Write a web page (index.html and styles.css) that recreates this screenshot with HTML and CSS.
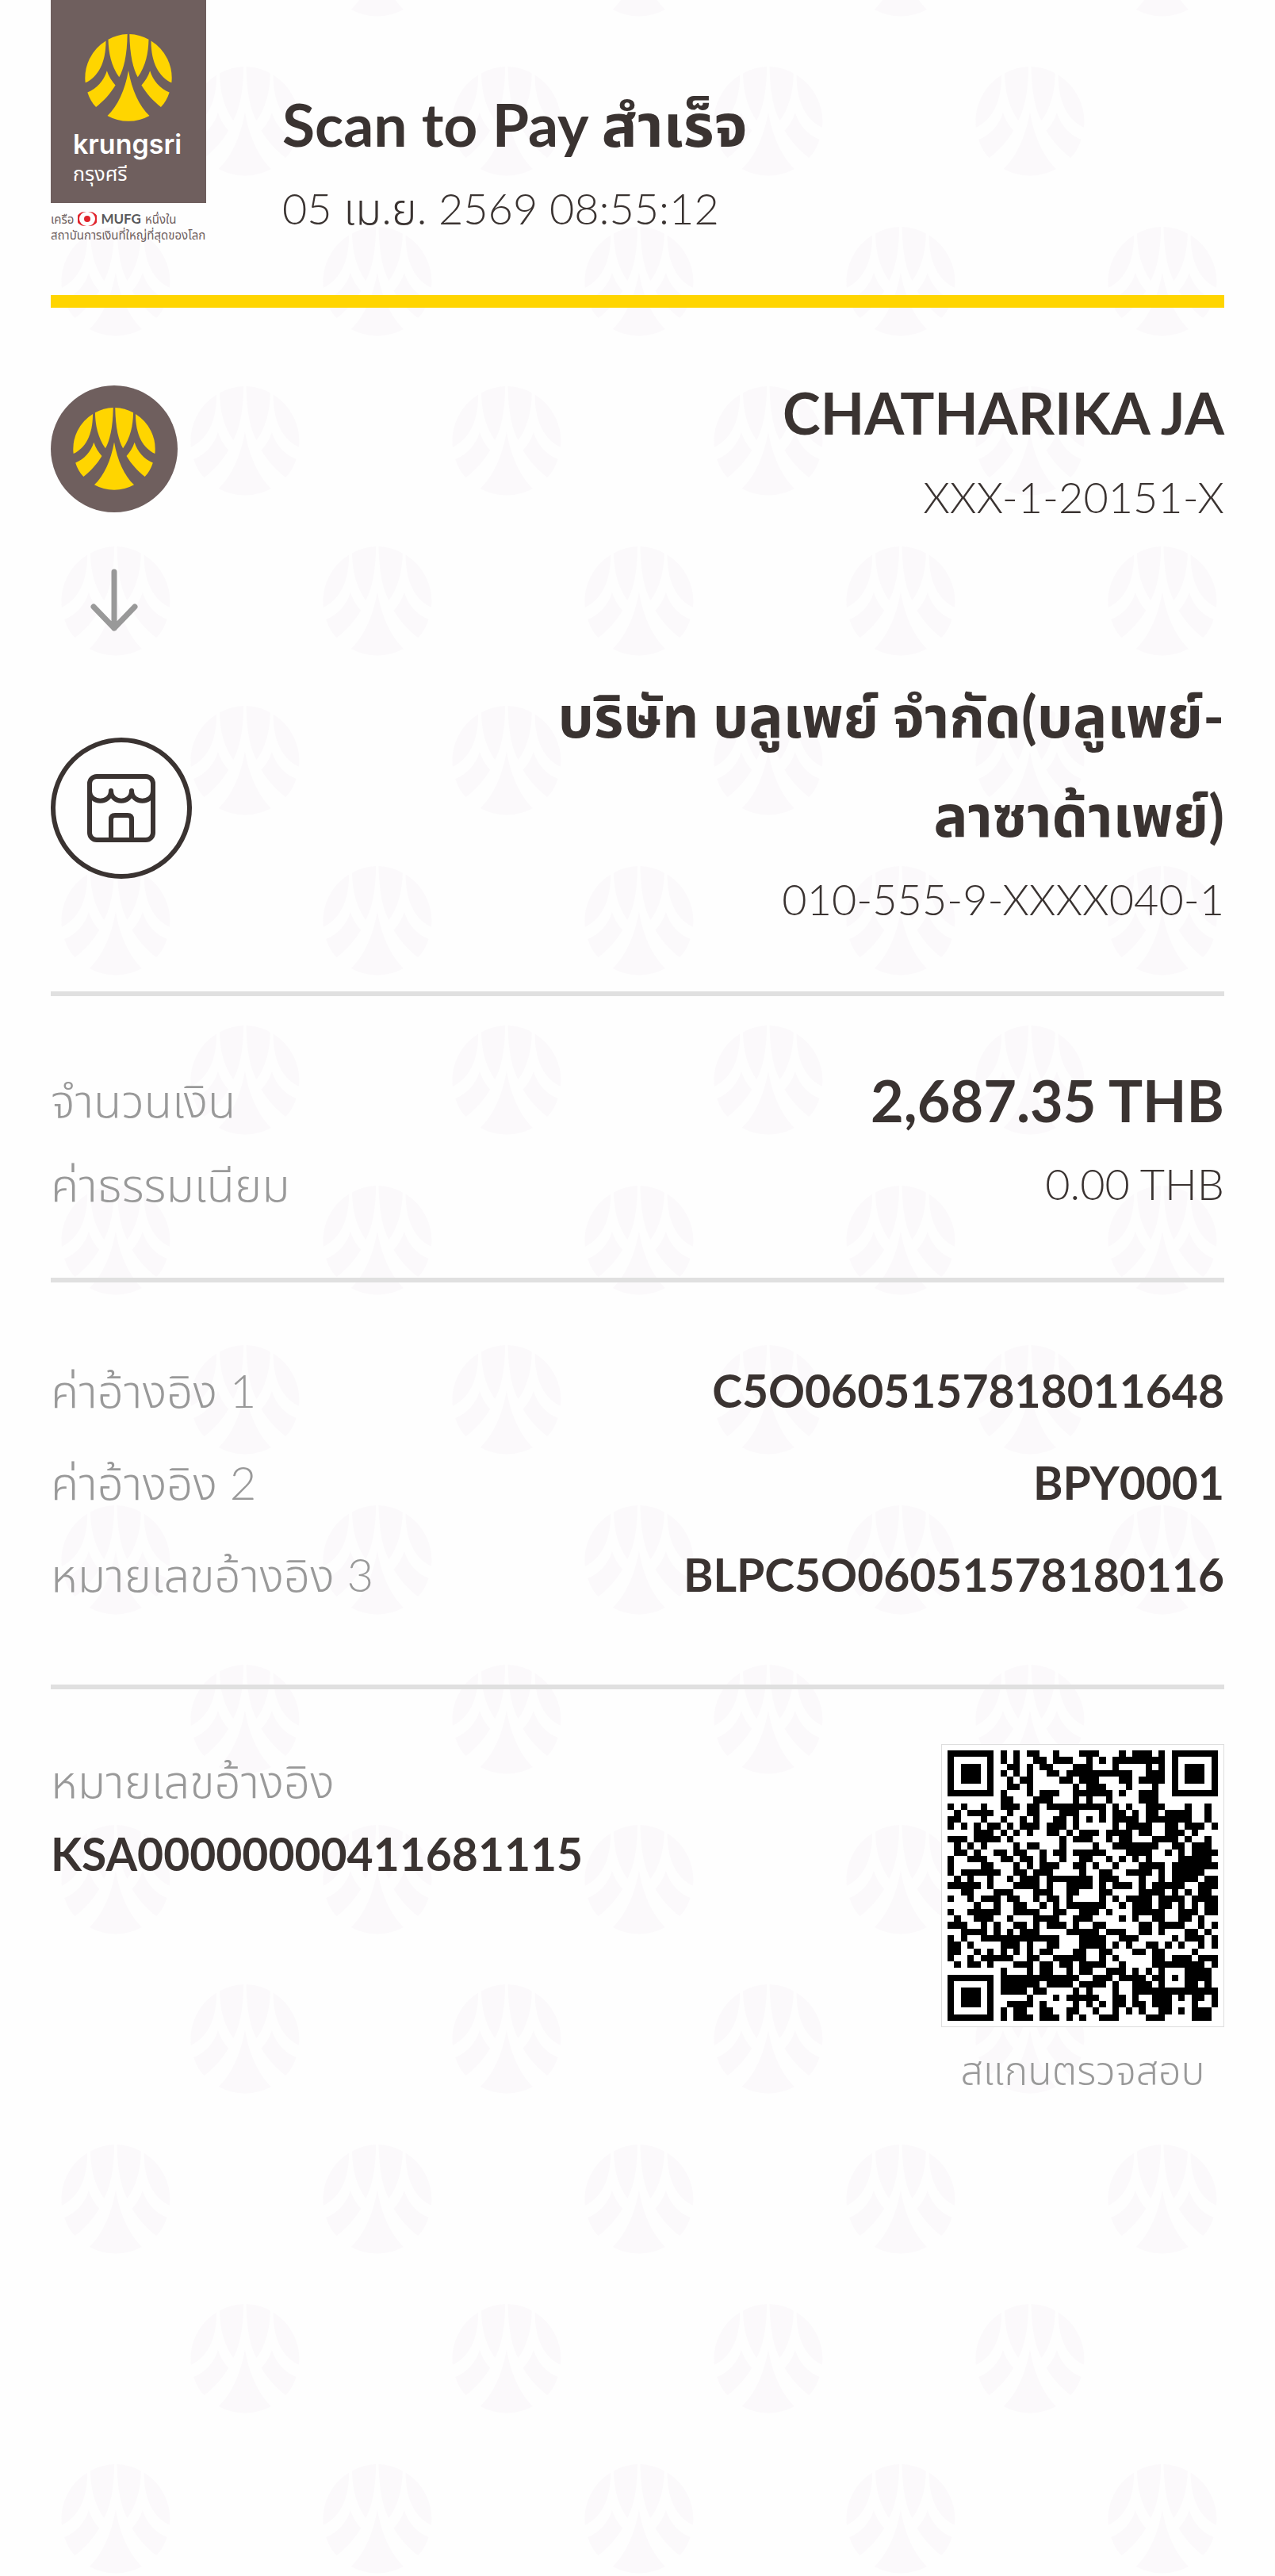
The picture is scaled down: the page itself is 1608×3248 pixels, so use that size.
FILE: index.html
```html
<!DOCTYPE html>
<html lang="th">
<head>
    <meta charset="UTF-8">
    <meta name="viewport" content="width=device-width, initial-scale=1.0">
    <title>Scan to Pay</title>
    <link rel="stylesheet" href="styles.css">
</head>
<body>

<svg class="defs" width="0" height="0" aria-hidden="true">
    <symbol id="mark" viewBox="0 0 328 328">
        <path d="M79 25C79 110 49 160 2 183A164 164 0 0 1 79 25Z"/>
        <path d="M88 20A164 164 0 0 1 160 0C159 80 146 132 129 162C99 120 89 70 88 20Z"/>
        <path d="M240 20A164 164 0 0 0 168 0C169 80 182 132 199 162C229 120 239 70 240 20Z"/>
        <path d="M249 25C249 110 279 160 326 183A164 164 0 0 0 249 25Z"/>
        <path d="M83 138C90 160 102 178 115 192C95 225 72 250 42 274C27 260 17 240 10 219C45 205 72 175 83 138Z"/>
        <path d="M245 138C238 160 226 178 213 192C233 225 256 250 286 274C301 260 311 240 318 219C283 205 256 175 245 138Z"/>
        <path d="M164 137C151 210 124 270 85 307A164 164 0 0 0 243 307C204 270 177 210 164 137Z"/>
    </symbol>
</svg>

<main class="slip">
    <header class="header">
        <div class="brand">
            <div class="brand-box">
                <svg class="brand-mark"><use href="#mark"/></svg>
                <div class="brand-name">krungsri</div>
                <div class="brand-thai">กรุงศรี</div>
            </div>
            <div class="brand-group">
                <div class="group-row">
                    <span>เครือ</span>
                    <svg class="mufg" viewBox="0 0 24 18">
                        <path d="M8 0A9 9 0 0 0 8 18L11 18A9 9 0 0 1 11 0Z" fill="#e0242c"/>
                        <path d="M16 0A9 9 0 0 1 16 18L13 18A9 9 0 0 0 13 0Z" fill="#e0242c"/>
                        <circle cx="12" cy="9" r="4" fill="#e0242c"/>
                    </svg>
                    <b>MUFG</b>
                    <span>หนึ่งใน</span>
                </div>
                <div>สถาบันการเงินที่ใหญ่ที่สุดของโลก</div>
            </div>
        </div>
        <div class="heading">
            <h1>Scan to Pay สำเร็จ</h1>
            <p>05 เม.ย. 2569 08:55:12</p>
        </div>
    </header>

    <section class="transfer">
        <div class="party from">
            <div class="avatar"><svg><use href="#mark"/></svg></div>
            <div class="party-info">
                <h2>CHATHARIKA JA</h2>
                <p>XXX-1-20151-X</p>
            </div>
        </div>
        <svg class="arrow" viewBox="0 0 60 80">
            <path d="M30 4V75M4 48L30 75L56 48"/>
        </svg>
        <div class="party to">
            <svg class="shop" viewBox="0 0 178 178">
                <circle cx="89" cy="89" r="86"/>
                <rect x="49" y="49" width="80" height="80" rx="9"/>
                <path d="M49 67C49 84 76 84 76 67C76 84 102 84 102 67C102 84 129 84 129 67"/>
                <path d="M76 129V103Q76 98 81 98H97Q102 98 102 103V129"/>
            </svg>
            <div class="party-info">
                <h2>บริษัท บลูเพย์ จำกัด(บลูเพย์-<br>ลาซาด้าเพย์)</h2>
                <p>010-555-9-XXXX040-1</p>
            </div>
        </div>
    </section>

    <dl class="amounts">
        <div class="row">
            <dt>จำนวนเงิน</dt>
            <dd class="total">2,687.35 THB</dd>
        </div>
        <div class="row">
            <dt>ค่าธรรมเนียม</dt>
            <dd>0.00 THB</dd>
        </div>
    </dl>

    <dl class="refs">
        <div class="row">
            <dt>ค่าอ้างอิง 1</dt>
            <dd>C5O0605157818011648</dd>
        </div>
        <div class="row">
            <dt>ค่าอ้างอิง 2</dt>
            <dd>BPY0001</dd>
        </div>
        <div class="row">
            <dt>หมายเลขอ้างอิง 3</dt>
            <dd>BLPC5O06051578180116</dd>
        </div>
    </dl>

    <section class="footer">
        <div class="slip-no">
            <p>หมายเลขอ้างอิง</p>
            <strong>KSA00000000411681115</strong>
        </div>
        <figure class="verify">
            <svg id="qr" viewBox="0 0 41 41" shape-rendering="crispEdges"></svg>
            <figcaption>สแกนตรวจสอบ</figcaption>
        </figure>
    </section>
</main>

<script>
    const size = 41;
    let seed = 4116;

    function nextBit() {
        seed = (seed * 1103515245 + 12345) % 2147483648;
        return seed / 2147483648 < 0.52;
    }

    // light rings sit at distance 2 and 4 from a corner square, 1 from the small one
    function squareAt(x, y, cx, cy, r) {
        const d = Math.max(Math.abs(x - cx), Math.abs(y - cy));
        if (d > r) return null;
        return r === 4 ? d !== 2 && d !== 4 : d !== 1;
    }

    function drawQr() {
        let path = "";
        for (let y = 0; y < size; y++) {
            for (let x = 0; x < size; x++) {
                let dark = nextBit();
                [[3, 3, 4], [37, 3, 4], [3, 37, 4], [34, 34, 2]].forEach(([cx, cy, r]) => {
                    const square = squareAt(x, y, cx, cy, r);
                    if (square !== null) dark = square;
                });
                if (dark) path += `M${x} ${y}h1v1h-1z`;
            }
        }
        document.getElementById("qr").innerHTML = `<path d="${path}"/>`;
    }

    drawQr();
</script>

</body>
</html>
```
FILE: styles.css
```css
* {
    box-sizing: border-box;
}
body {
    margin: 0;
    font-family: Lato, "Noto Sans Thai", "Noto Sans", sans-serif;
    font-weight: 300;
    font-size: 54px;
    line-height: 88px;
    color: #3a3331;
    background: #fefefe;
}
.defs {
    display: block;
}
h1, h2, p, dl, dd, figure {
    margin: 0;
}
h1, h2 {
    font-size: 72px;
    font-weight: 700;
    line-height: 125px;
}
h1 {
    font-size: 75px;
}
.slip {
    min-height: 100vh;
    padding: 0 64px;
    background-image: url("data:image/svg+xml,%3Csvg xmlns='http://www.w3.org/2000/svg' width='330' height='403'%3E%3Cdefs%3E%3Cg id='m' fill='%23fbf9fb'%3E%3Cpath d='M79 25C79 110 49 160 2 183A164 164 0 0 1 79 25ZM88 20A164 164 0 0 1 160 0C159 80 146 132 129 162C99 120 89 70 88 20ZM240 20A164 164 0 0 0 168 0C169 80 182 132 199 162C229 120 239 70 240 20ZM249 25C249 110 279 160 326 183A164 164 0 0 0 249 25ZM83 138C90 160 102 178 115 192C95 225 72 250 42 274C27 260 17 240 10 219C45 205 72 175 83 138ZM245 138C238 160 226 178 213 192C233 225 256 250 286 274C301 260 311 240 318 219C283 205 256 175 245 138ZM164 137C151 210 124 270 85 307A164 164 0 0 0 243 307C204 270 177 210 164 137Z'/%3E%3C/g%3E%3C/defs%3E%3Cuse href='%23m' transform='translate(240 84) scale(.42)'/%3E%3Cuse href='%23m' transform='translate(-90 84) scale(.42)'/%3E%3Cuse href='%23m' transform='translate(77 286) scale(.42)'/%3E%3Cuse href='%23m' transform='translate(77 -117) scale(.42)'/%3E%3C/svg%3E");
    background-origin: border-box;
    background-clip: content-box;
}
.header {
    display: flex;
    gap: 96px;
    height: 388px;
    border-bottom: 16px solid #ffd500;
}
.brand {
    width: 196px;
}
.brand-box {
    height: 256px;
    padding: 43px 28px 0;
    background: #6f5f5e;
    color: white;
}
.brand-mark {
    display: block;
    width: 110px;
    height: 110px;
    margin: 0 auto 8px;
    fill: #ffd500;
}
.brand-name {
    font-family: Inter, sans-serif;
    font-size: 34px;
    font-weight: 600;
    line-height: 42px;
}
.brand-thai {
    font-size: 25px;
    font-weight: 400;
    line-height: 30px;
}
.brand-group {
    padding-top: 10px;
    font-size: 15px;
    font-weight: 400;
    line-height: 20px;
    color: #6f5f5e;
    white-space: nowrap;
}
.group-row {
    display: flex;
    align-items: center;
    gap: 5px;
}
.group-row b {
    font-size: 17px;
    color: #58595b;
}
.mufg {
    width: 24px;
    height: 18px;
}
.heading {
    padding-top: 94px;
}
.transfer {
    padding: 70px 0 72px;
    border-bottom: 6px solid #e0e0e0;
}
.party {
    display: flex;
    justify-content: space-between;
    align-items: flex-start;
}
.party-info {
    text-align: right;
}
.avatar {
    display: flex;
    width: 160px;
    height: 160px;
    margin-top: 28px;
    border-radius: 50%;
    background: #6f5f5e;
}
.avatar svg {
    width: 104px;
    height: 104px;
    margin: auto;
    fill: #ffd500;
}
.arrow {
    display: block;
    width: 60px;
    height: 80px;
    margin: 46px 50px 43px;
}
.arrow path {
    fill: none;
    stroke: #999;
    stroke-width: 7;
    stroke-linecap: round;
    stroke-linejoin: round;
}
.shop {
    width: 178px;
    height: 178px;
    margin-top: 90px;
    fill: none;
    stroke: #3a3331;
    stroke-width: 6;
    stroke-linejoin: round;
}
.shop circle {
    fill: #fefefe;
}
.row {
    display: flex;
    justify-content: space-between;
}
dt, .slip-no p, figcaption {
    font-size: 58px;
    color: #999;
}
.amounts {
    padding: 78px 0 65px;
    border-bottom: 6px solid #e0e0e0;
    line-height: 106px;
}
.amounts .total {
    font-size: 72px;
    font-weight: 700;
}
.refs {
    padding: 78px 0 81px;
    border-bottom: 6px solid #e0e0e0;
    line-height: 116px;
}
.refs dd, .slip-no strong {
    font-size: 57px;
    font-weight: 700;
}
.footer {
    display: flex;
    justify-content: space-between;
    padding-top: 69px;
}
.slip-no {
    line-height: 92px;
}
.verify {
    width: 357px;
    text-align: center;
}
.verify svg {
    display: block;
    width: 100%;
    padding: 7px;
    border: 1px solid #ddd;
    background: white;
}
figcaption {
    font-size: 50px;
    line-height: 108px;
}
```
